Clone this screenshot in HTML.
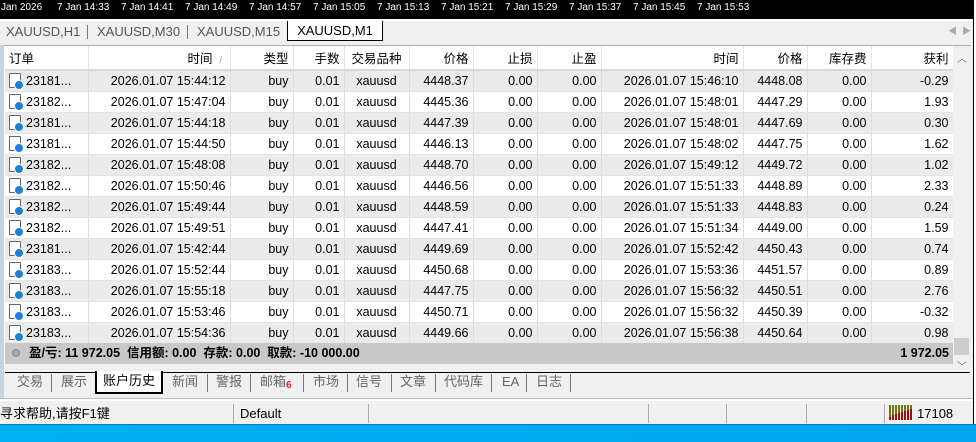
<!DOCTYPE html>
<html><head><meta charset="utf-8"><style>
*{margin:0;padding:0;box-sizing:border-box}
body{width:976px;height:442px;overflow:hidden;background:#f0f0f0;font-family:"Liberation Sans","Noto Sans CJK SC",sans-serif;font-size:12.5px;color:#000;position:relative}
.a{position:absolute}
#top{left:0;top:0;width:976px;height:21px;background:#000;border-bottom:2px solid #fff}
#top span{position:absolute;top:2px;color:#fff;font-size:10px}
#top i{position:absolute;top:0;width:1px;height:4px;background:#fff}
.ct{top:21px;height:22px;font-size:13px;color:#555;line-height:22px}
table{border-collapse:collapse;table-layout:fixed}
td{height:21px;padding:0 4px;text-align:right;white-space:nowrap;overflow:hidden;border-right:1px solid #ddd;border-bottom:1px solid #e3e3e3;font-size:12.5px}
tr.g td{background:#ebebeb}
tr.w td{background:#fff}
tr.h td{background:#fff;height:24px;border-right:1px solid #e6e6e6;border-bottom:2px solid #d8d8d8}
td.l{text-align:left}
td.c{text-align:center}
.ic{display:inline-block;width:12px;height:15px;border:1px solid #666;background:#fff;vertical-align:-3px;margin-right:5px;position:relative;border-radius:1px}
.ic:after{content:"";position:absolute;right:-4px;bottom:-3px;width:8px;height:8px;border-radius:50%;background:#1e7fd8;border:1px solid #fff}
.bt{top:372px;font-size:13px;color:#666;line-height:20px}
.sep{position:absolute;width:1px;height:18px;background:#777}
</style></head><body>
<div id="top" class="a">
<span style="left:1px">Jan 2026</span>
<span style="left:57px">7 Jan 14:33</span><span style="left:121px">7 Jan 14:41</span><span style="left:185px">7 Jan 14:49</span><span style="left:249px">7 Jan 14:57</span><span style="left:313px">7 Jan 15:05</span><span style="left:377px">7 Jan 15:13</span><span style="left:441px">7 Jan 15:21</span><span style="left:505px">7 Jan 15:29</span><span style="left:569px">7 Jan 15:37</span><span style="left:633px">7 Jan 15:45</span><span style="left:697px">7 Jan 15:53</span>
</div>
<div class="a" style="left:973px;top:0;width:3px;height:442px;background:#fff;border-left:1px solid #000"></div>
<div class="a ct" style="left:6px">XAUUSD,H1</div>
<div class="sep" style="left:87px;top:25px;height:14px"></div>
<div class="a ct" style="left:97px">XAUUSD,M30</div>
<div class="sep" style="left:187px;top:25px;height:14px"></div>
<div class="a ct" style="left:197px">XAUUSD,M15</div>
<div class="a ct" style="left:287px;top:21px;width:96px;height:20px;background:#fff;border:1px solid #000;border-top:none;color:#000;text-align:center;line-height:20px">XAUUSD,M1</div>
<div class="a" style="left:948px;top:24px;color:#aaa;font-size:9px">◀ &nbsp;▶</div>
<div class="a" style="left:0;top:45px;width:4px;height:355px;background:#c9d3de"></div>
<div class="a" style="left:4px;top:45px;width:967px;height:318px;background:#fff;border-top:1px solid #aaa"></div>
<table class="a" style="left:5px;top:46px;width:948px">
<colgroup><col style="width:83px"><col style="width:142px"><col style="width:63px"><col style="width:51px"><col style="width:65px"><col style="width:64px"><col style="width:64px"><col style="width:64px"><col style="width:142px"><col style="width:64px"><col style="width:64px"><col style="width:82px"></colgroup>
<tr class="h"><td class="l">订单</td><td>时间 &nbsp;<span style="color:#999;font-size:9px">/</span>&nbsp;</td><td>类型</td><td>手数</td><td class="c">交易品种</td><td>价格</td><td>止损</td><td>止盈</td><td>时间</td><td>价格</td><td>库存费</td><td>获利</td></tr>
<tr class="g"><td class="l"><span class="ic"></span>23181...</td><td>2026.01.07 15:44:12</td><td>buy</td><td>0.01</td><td class="c">xauusd</td><td>4448.37</td><td>0.00</td><td>0.00</td><td>2026.01.07 15:46:10</td><td>4448.08</td><td>0.00</td><td>-0.29</td></tr>
<tr class="w"><td class="l"><span class="ic"></span>23182...</td><td>2026.01.07 15:47:04</td><td>buy</td><td>0.01</td><td class="c">xauusd</td><td>4445.36</td><td>0.00</td><td>0.00</td><td>2026.01.07 15:48:01</td><td>4447.29</td><td>0.00</td><td>1.93</td></tr>
<tr class="g"><td class="l"><span class="ic"></span>23181...</td><td>2026.01.07 15:44:18</td><td>buy</td><td>0.01</td><td class="c">xauusd</td><td>4447.39</td><td>0.00</td><td>0.00</td><td>2026.01.07 15:48:01</td><td>4447.69</td><td>0.00</td><td>0.30</td></tr>
<tr class="w"><td class="l"><span class="ic"></span>23181...</td><td>2026.01.07 15:44:50</td><td>buy</td><td>0.01</td><td class="c">xauusd</td><td>4446.13</td><td>0.00</td><td>0.00</td><td>2026.01.07 15:48:02</td><td>4447.75</td><td>0.00</td><td>1.62</td></tr>
<tr class="g"><td class="l"><span class="ic"></span>23182...</td><td>2026.01.07 15:48:08</td><td>buy</td><td>0.01</td><td class="c">xauusd</td><td>4448.70</td><td>0.00</td><td>0.00</td><td>2026.01.07 15:49:12</td><td>4449.72</td><td>0.00</td><td>1.02</td></tr>
<tr class="w"><td class="l"><span class="ic"></span>23182...</td><td>2026.01.07 15:50:46</td><td>buy</td><td>0.01</td><td class="c">xauusd</td><td>4446.56</td><td>0.00</td><td>0.00</td><td>2026.01.07 15:51:33</td><td>4448.89</td><td>0.00</td><td>2.33</td></tr>
<tr class="g"><td class="l"><span class="ic"></span>23182...</td><td>2026.01.07 15:49:44</td><td>buy</td><td>0.01</td><td class="c">xauusd</td><td>4448.59</td><td>0.00</td><td>0.00</td><td>2026.01.07 15:51:33</td><td>4448.83</td><td>0.00</td><td>0.24</td></tr>
<tr class="w"><td class="l"><span class="ic"></span>23182...</td><td>2026.01.07 15:49:51</td><td>buy</td><td>0.01</td><td class="c">xauusd</td><td>4447.41</td><td>0.00</td><td>0.00</td><td>2026.01.07 15:51:34</td><td>4449.00</td><td>0.00</td><td>1.59</td></tr>
<tr class="g"><td class="l"><span class="ic"></span>23181...</td><td>2026.01.07 15:42:44</td><td>buy</td><td>0.01</td><td class="c">xauusd</td><td>4449.69</td><td>0.00</td><td>0.00</td><td>2026.01.07 15:52:42</td><td>4450.43</td><td>0.00</td><td>0.74</td></tr>
<tr class="w"><td class="l"><span class="ic"></span>23183...</td><td>2026.01.07 15:52:44</td><td>buy</td><td>0.01</td><td class="c">xauusd</td><td>4450.68</td><td>0.00</td><td>0.00</td><td>2026.01.07 15:53:36</td><td>4451.57</td><td>0.00</td><td>0.89</td></tr>
<tr class="g"><td class="l"><span class="ic"></span>23183...</td><td>2026.01.07 15:55:18</td><td>buy</td><td>0.01</td><td class="c">xauusd</td><td>4447.75</td><td>0.00</td><td>0.00</td><td>2026.01.07 15:56:32</td><td>4450.51</td><td>0.00</td><td>2.76</td></tr>
<tr class="w"><td class="l"><span class="ic"></span>23183...</td><td>2026.01.07 15:53:46</td><td>buy</td><td>0.01</td><td class="c">xauusd</td><td>4450.71</td><td>0.00</td><td>0.00</td><td>2026.01.07 15:56:32</td><td>4450.39</td><td>0.00</td><td>-0.32</td></tr>
<tr class="g"><td class="l"><span class="ic"></span>23183...</td><td>2026.01.07 15:54:36</td><td>buy</td><td>0.01</td><td class="c">xauusd</td><td>4449.66</td><td>0.00</td><td>0.00</td><td>2026.01.07 15:56:38</td><td>4450.64</td><td>0.00</td><td>0.98</td></tr>
</table>
<div class="a" style="left:5px;top:343px;width:948px;height:21px;background:#c8c8c8;font-weight:bold;line-height:21px;font-size:12.5px">
<span style="display:inline-block;width:8px;height:8px;border-radius:50%;background:#aaa;border:1px solid #888;margin:0 9px 0 7px;vertical-align:0"></span>盈/亏: 11 972.05 &nbsp;信用额: 0.00 &nbsp;存款: 0.00 &nbsp;取款: -10 000.00
<span style="position:absolute;right:4px">1 972.05</span></div>
<div class="a" style="left:953px;top:46px;width:18px;height:317px;background:#f0f0f0"></div>
<div class="a" style="left:957px;top:50px;color:#666;font-size:10px">︿</div>
<div class="a" style="left:954px;top:338px;width:15px;height:17px;background:#cdcdcd"></div>
<div class="a" style="left:957px;top:358px;color:#666;font-size:10px">﹀</div>
<div class="a" style="left:5px;top:372px;width:965px;height:2px;background:#000"></div>
<div class="a" style="left:5px;top:373px;width:965px;height:1px;background:#f0f0f0"></div>
<div class="a bt" style="left:17px">交易</div><div class="sep" style="left:51px;top:374px"></div>
<div class="a bt" style="left:61px">展示</div>
<div class="a" style="left:95px;top:371px;width:68px;height:23px;background:#fff;border:2px solid #000;border-top:none;font-size:13px;line-height:20px;text-align:center">账户历史</div>
<div class="a bt" style="left:172px">新闻</div><div class="sep" style="left:207px;top:374px"></div>
<div class="a bt" style="left:216px">警报</div><div class="sep" style="left:250px;top:374px"></div>
<div class="a bt" style="left:260px">邮箱</div><div class="a" style="left:286px;top:380px;color:#e02020;font-size:10px;font-weight:bold">6</div><div class="sep" style="left:303px;top:374px"></div>
<div class="a bt" style="left:313px">市场</div><div class="sep" style="left:347px;top:374px"></div>
<div class="a bt" style="left:356px">信号</div><div class="sep" style="left:391px;top:374px"></div>
<div class="a bt" style="left:400px">文章</div><div class="sep" style="left:435px;top:374px"></div>
<div class="a bt" style="left:444px">代码库</div><div class="sep" style="left:491px;top:374px"></div>
<div class="a bt" style="left:502px">EA</div><div class="sep" style="left:526px;top:374px"></div>
<div class="a bt" style="left:536px">日志</div><div class="sep" style="left:570px;top:374px"></div>
<div class="a" style="left:0;top:398px;width:973px;height:3px;background:#fff;border-top:1px solid #bbb"></div>
<div class="a" style="left:0;top:404px;font-size:13px;line-height:20px">寻求帮助,请按F1键</div>
<div class="a" style="left:240px;top:404px;font-size:13px;line-height:20px">Default</div>
<div class="sep" style="left:233px;top:404px;height:19px;background:#aaa"></div>
<div class="sep" style="left:368px;top:404px;height:19px;background:#aaa"></div>
<div class="sep" style="left:648px;top:404px;height:19px;background:#aaa"></div>
<div class="sep" style="left:726px;top:404px;height:19px;background:#aaa"></div>
<div class="sep" style="left:806px;top:404px;height:19px;background:#aaa"></div>
<div class="sep" style="left:884px;top:404px;height:19px;background:#aaa"></div>
<svg class="a" style="left:889px;top:405px" width="24" height="15">
<g stroke-width="2">
<line x1="1" y1="15" x2="1" y2="0" stroke="#6a7a10"/><line x1="4" y1="15" x2="4" y2="0" stroke="#6a7a10"/><line x1="7" y1="15" x2="7" y2="0" stroke="#6a7a10"/><line x1="10" y1="15" x2="10" y2="0" stroke="#6a7a10"/><line x1="13" y1="15" x2="13" y2="0" stroke="#6a7a10"/><line x1="16" y1="15" x2="16" y2="0" stroke="#6a7a10"/><line x1="19" y1="15" x2="19" y2="0" stroke="#6a7a10"/><line x1="22" y1="15" x2="22" y2="0" stroke="#6a7a10"/>
<line x1="1" y1="15" x2="1" y2="12" stroke="#a01010"/><line x1="4" y1="15" x2="4" y2="10" stroke="#a01010"/><line x1="7" y1="15" x2="7" y2="9" stroke="#a01010"/><line x1="10" y1="15" x2="10" y2="8" stroke="#a01010"/><line x1="13" y1="15" x2="13" y2="7" stroke="#a01010"/><line x1="16" y1="15" x2="16" y2="6" stroke="#a01010"/><line x1="19" y1="15" x2="19" y2="5" stroke="#a01010"/><line x1="22" y1="15" x2="22" y2="4" stroke="#a01010"/>
</g></svg>
<div class="a" style="left:917px;top:404px;font-size:13px;line-height:20px">17108</div>
<div class="a" style="left:0;top:424px;width:976px;height:18px;background:linear-gradient(90deg,#00b0f0,#00a6ee);border-top:1px solid #0a7cc0"></div>
</body></html>
